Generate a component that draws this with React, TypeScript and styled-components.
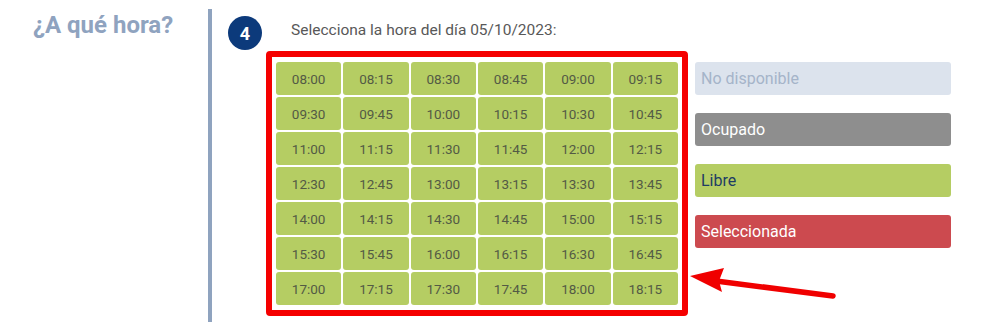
import React from "react";
import styled, { createGlobalStyle } from "styled-components";

const GlobalStyle = createGlobalStyle`
  body {
    margin: 0;
    background: #fff;
    font-family: Roboto, "Liberation Sans", Arial, sans-serif;
  }
`;

const Page = styled.div`
  display: flex;
  padding-top: 9px;
  width: 991px;
  height: 327px;
  box-sizing: border-box;
  overflow: hidden;
`;

const Aside = styled.div`
  width: 208px;
  padding-left: 33px;
  box-sizing: border-box;
`;

const Heading = styled.h2`
  margin: 2px 0 0;
  font-size: 24px;
  line-height: 28px;
  font-weight: 700;
  color: #8fa3bf;
`;

const Main = styled.div`
  position: relative;
  border-left: 4px solid #8fa3bf;
  height: 313px;
  padding-left: 16px;
  flex: 1;
`;

const StepRow = styled.div`
  display: flex;
  align-items: flex-start;
  gap: 29px;
`;

const StepBadge = styled.div`
  margin-top: 7px;
  width: 34px;
  height: 34px;
  border-radius: 50%;
  background: #0c3a7b;
  color: #fff;
  font-size: 18px;
  font-weight: 700;
  display: flex;
  align-items: center;
  justify-content: center;
`;

const StepText = styled.div`
  margin-top: 12px;
  font-size: 15.5px;
  line-height: 18px;
  color: #585858;
`;

const Body = styled.div`
  display: flex;
  align-items: flex-start;
  gap: 7px;
  margin-top: 1px;
  margin-left: 38px;
`;

const Highlight = styled.div`
  width: 422px;
  box-sizing: border-box;
  border: 6px solid #f50000;
  border-radius: 4px;
  padding: 5px 4px 5px 4px;
`;

const SlotGrid = styled.div`
  display: grid;
  grid-template-columns: repeat(6, 1fr);
  grid-auto-rows: 33px;
  gap: 2px;
  background: #fff;
`;

const Slot = styled.div`
  background: #b5cd63;
  border-radius: 3px;
  color: #535a45;
  font-size: 13.5px;
  display: flex;
  align-items: center;
  justify-content: center;
`;

const Legend = styled.div`
  margin-top: 11px;
  width: 256px;
  display: flex;
  flex-direction: column;
  gap: 18px;
`;

const LegendItem = styled.div<{ $bg: string; $fg: string }>`
  height: 33px;
  border-radius: 3px;
  background: ${(p) => p.$bg};
  color: ${(p) => p.$fg};
  font-size: 16px;
  padding-left: 6px;
  display: flex;
  align-items: center;
`;

const Arrow = styled.svg`
  position: absolute;
  left: 474px;
  top: 253px;
`;

const legend = [
  { label: "No disponible", bg: "#dce3ed", fg: "#a5b4c9" },
  { label: "Ocupado", bg: "#8e8e8e", fg: "#fff" },
  { label: "Libre", bg: "#b5cd63", fg: "#1e3c64" },
  { label: "Seleccionada", bg: "#cc4a4f", fg: "#fff" },
];

const slots = Array.from({ length: 42 }, (v, i) => {
  const mins = 8 * 60 + i * 15;
  const h = String(Math.floor(mins / 60)).padStart(2, "0");
  const m = String(mins % 60).padStart(2, "0");
  return `${h}:${m}`;
});

const App = () => {
  return (
    <>
      <GlobalStyle />
      <Page>
        <Aside>
          <Heading>¿A qué hora?</Heading>
        </Aside>
        <Main>
          <StepRow>
            <StepBadge>4</StepBadge>
            <StepText>Selecciona la hora del día 05/10/2023:</StepText>
          </StepRow>
          <Body>
            <Highlight>
              <SlotGrid>
                {slots.map((t) => (
                  <Slot key={t}>{t}</Slot>
                ))}
              </SlotGrid>
            </Highlight>
            <Legend>
              {legend.map((l) => (
                <LegendItem key={l.label} $bg={l.bg} $fg={l.fg}>
                  {l.label}
                </LegendItem>
              ))}
            </Legend>
          </Body>
          {/* annotation arrow pointing at the grid */}
          <Arrow width="152" height="44" viewBox="0 0 152 44">
            <line
              x1="30"
              y1="19"
              x2="147"
              y2="34"
              stroke="#f00000"
              strokeWidth="5.5"
              strokeLinecap="round"
            />
            <polygon points="4,14 38,6 33,19 36,30" fill="#f00000" />
          </Arrow>
        </Main>
      </Page>
    </>
  );
};

export default App;
